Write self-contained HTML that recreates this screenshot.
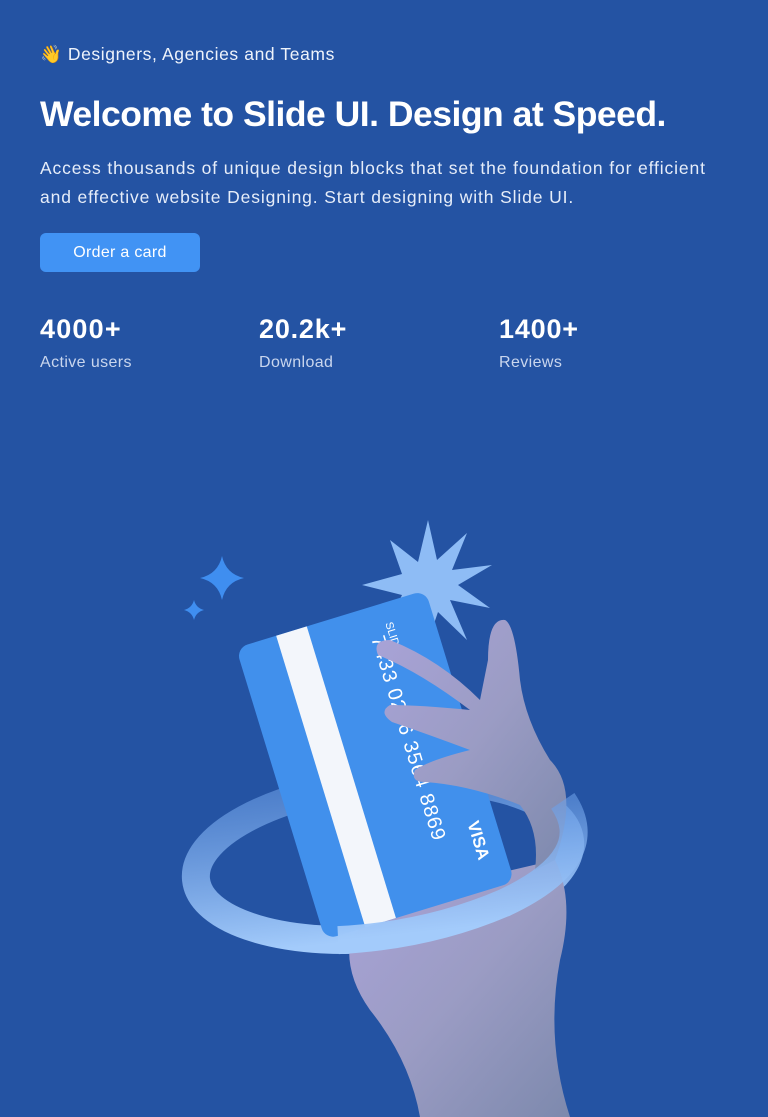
<!DOCTYPE html>
<html><head><meta charset="utf-8"><style>
html,body{margin:0;padding:0}
body{width:768px;height:1117px;background:#2453a3;font-family:"Liberation Sans",sans-serif;color:#fff;position:relative;overflow:hidden}
.a{position:absolute;white-space:nowrap}
</style></head><body>
<div class="a" style="left:40px;top:44px;font-size:17.5px;letter-spacing:0.6px;color:#eef3fb">👋 Designers, Agencies and Teams</div>
<div class="a" style="left:40px;top:94px;font-size:35.5px;font-weight:bold;letter-spacing:-0.5px">Welcome to Slide UI. Design at Speed.</div>
<div class="a" style="left:40px;top:154px;font-size:17.5px;line-height:29px;letter-spacing:0.87px;color:#e6edf9">Access thousands of unique design blocks that set the foundation for efficient<br>and effective website Designing. Start designing with Slide UI.</div>
<div class="a" style="left:40px;top:233px;width:160px;height:39px;background:#4193f4;border-radius:6px;font-size:16px;line-height:39px;text-align:center;letter-spacing:0.3px">Order a card</div>
<div class="a" style="left:40px;top:314px;font-size:27px;font-weight:bold;letter-spacing:1.2px">4000+</div>
<div class="a" style="left:259px;top:314px;font-size:27px;font-weight:bold;letter-spacing:0.8px">20.2k+</div>
<div class="a" style="left:499px;top:314px;font-size:27px;font-weight:bold;letter-spacing:0.8px">1400+</div>
<div class="a" style="left:40px;top:354px;font-size:16px;letter-spacing:0.4px;color:#c9d6ee">Active users</div>
<div class="a" style="left:259px;top:354px;font-size:16px;letter-spacing:0.4px;color:#c9d6ee">Download</div>
<div class="a" style="left:499px;top:354px;font-size:16px;letter-spacing:0.4px;color:#c9d6ee">Reviews</div>
<svg class="a" style="left:0;top:0" width="768" height="1117" viewBox="0 0 768 1117">
<defs>
<linearGradient id="h" x1="0" y1="0" x2="1" y2="1"><stop offset="0" stop-color="#a9a3d8"/><stop offset=".5" stop-color="#9b9cc4"/><stop offset="1" stop-color="#7d89ad"/></linearGradient>
<linearGradient id="r" x1="0" y1="0" x2="0" y2="1"><stop offset="0" stop-color="#6b9ee6" stop-opacity=".6"/><stop offset="1" stop-color="#a3cbfb"/></linearGradient>
</defs>
<polygon fill="#8ebcf5" points="428,520 437,560 467,533 452,570 492,565 458,585 490,608 450,600 467,640 438,612 425,650 415,612 385,630 402,595 362,585 402,574 390,540 418,562"/>
<path fill="#3f8ef0" d="M222,556 Q226,574 244,578 Q226,582 222,600 Q218,582 200,578 Q218,574 222,556Z"/>
<path fill="#3f8ef0" d="M194,600 Q196,608 204,610 Q196,612 194,620 Q192,612 184,610 Q192,608 194,600Z"/>
<ellipse cx="383" cy="860" rx="188" ry="78" fill="none" stroke="url(#r)" stroke-width="28" transform="rotate(-6 383 860)"/>
<path fill="url(#h)" d="M350,940 Q380,900 470,880 L555,860 Q575,900 560,960 Q545,1040 570,1117 L420,1117 Q410,1060 370,1010 Q345,975 350,940Z"/>
<g transform="translate(236,648) rotate(-17)">
<rect x="0" y="0" width="198" height="305" rx="12" fill="#4190ec"/>
<rect x="42" y="0" width="32" height="305" fill="#f3f6fb"/>
<text x="150" y="20" transform="rotate(90 150 20)" font-size="11" fill="#fff">SLIDE</text>
<text x="132" y="30" transform="rotate(90 132 30)" font-size="20" fill="#fff" letter-spacing="1">7433 0226 3564 8869</text>
<text x="170" y="235" transform="rotate(90 170 235)" font-size="17" font-weight="bold" fill="#fff">VISA</text>
</g>
<path fill="url(#h)" d="M555,860 Q580,790 550,760 Q525,720 520,680 Q515,625 505,620 Q488,618 488,660 L480,700 Q440,660 390,640 Q372,640 378,655 Q420,672 470,710 Q420,705 390,705 Q378,712 392,722 Q430,735 470,750 Q430,760 415,770 Q410,782 425,782 Q470,785 520,805 Q540,830 535,870Z"/>
<path fill="none" stroke="url(#r)" stroke-width="28" d="M568,820 Q600,880 500,915 Q420,940 330,935" transform="rotate(-6 383 860)"/>
</svg>
</body></html>
